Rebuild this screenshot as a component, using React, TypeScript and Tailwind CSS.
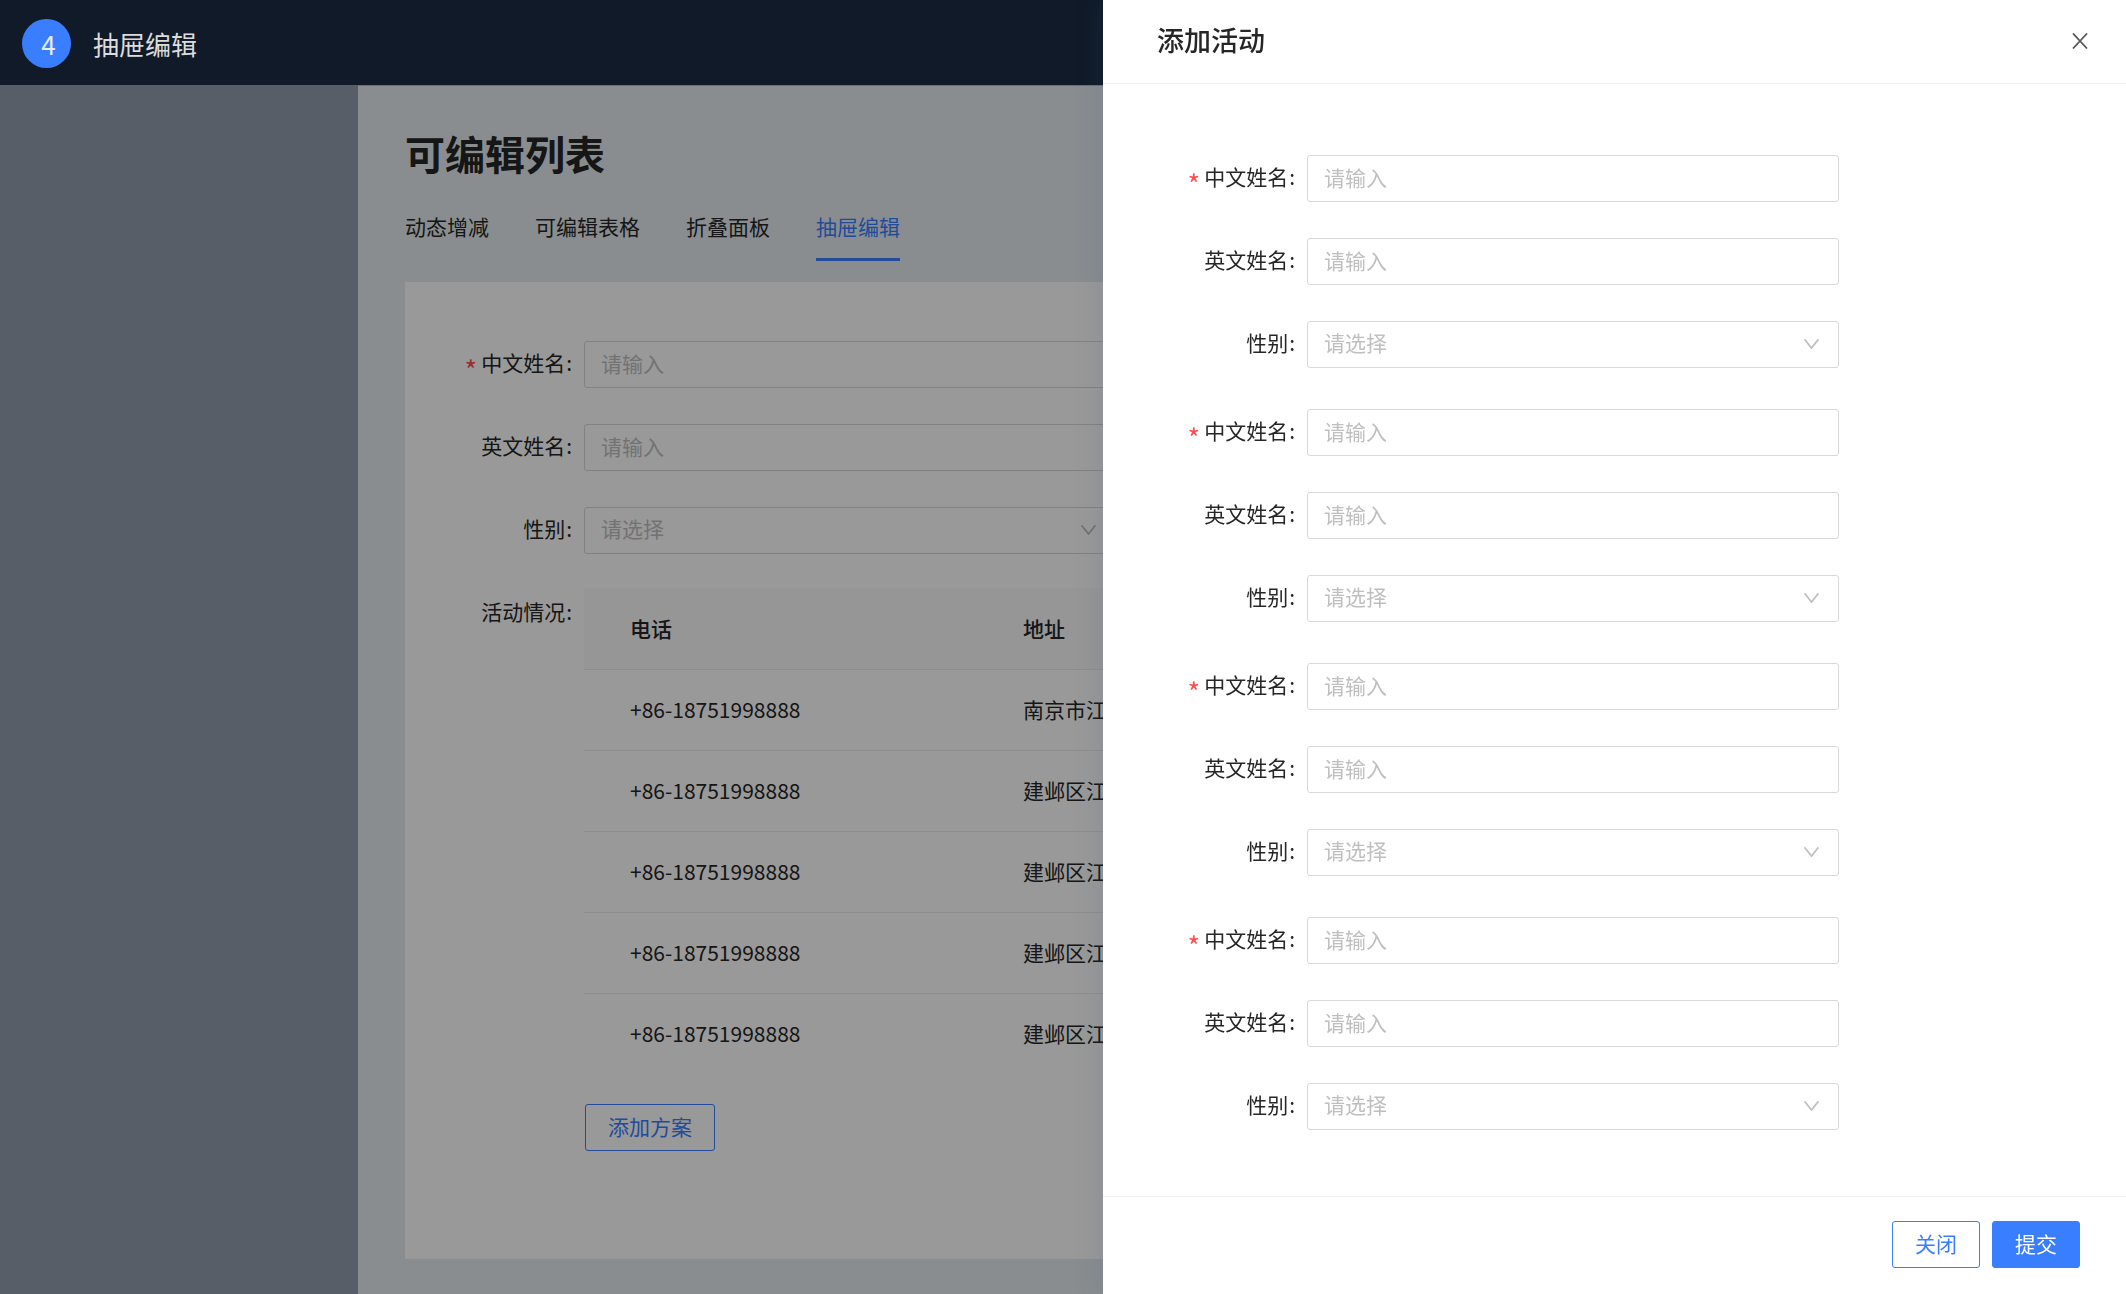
import { useId, useState } from "react";
import type { ReactNode } from "react";

interface Row {
  phone: string;
  address: string;
}

const tabs = ["动态增减", "可编辑表格", "折叠面板", "抽屉编辑"];

const rows: Row[] = [
  { phone: "+86-18751998888", address: "南京市江宁区" },
  { phone: "+86-18751998888", address: "建邺区江东中路" },
  { phone: "+86-18751998888", address: "建邺区江东中路" },
  { phone: "+86-18751998888", address: "建邺区江东中路" },
  { phone: "+86-18751998888", address: "建邺区江东中路" },
];

const controlClass =
  "h-[47px] w-full rounded-[3px] border border-[#d9d9d9] bg-white px-4 pb-[3px] text-[21px] outline-none";

function Label({
  text,
  htmlFor,
  required,
}: {
  text: string;
  htmlFor?: string;
  required?: boolean;
}) {
  const content = (
    <>
      {required && (
        <span className="mr-1 pt-3 text-[27px] leading-none text-[#ff4d4f]">
          *
        </span>
      )}
      {text}
      <span className="ml-px">:</span>
    </>
  );
  if (!htmlFor) {
    return <span className="flex items-center whitespace-nowrap">{content}</span>;
  }
  return (
    <label htmlFor={htmlFor} className="flex items-center whitespace-nowrap">
      {content}
    </label>
  );
}

function Field({
  label,
  required,
  children,
}: {
  label: string;
  required?: boolean;
  children: (id: string) => ReactNode;
}) {
  const id = useId();
  return (
    <>
      <div className="flex items-center justify-end pr-3 pb-[3px]">
        <Label text={label} htmlFor={id} required={required} />
      </div>
      <div className="relative max-w-[532px]">{children(id)}</div>
    </>
  );
}

function PersonFields() {
  return (
    <>
      <Field label="中文姓名" required>
        {(id) => (
          <input
            id={id}
            type="text"
            placeholder="请输入"
            className={`${controlClass} placeholder:text-[#bfbfbf]`}
          />
        )}
      </Field>
      <Field label="英文姓名">
        {(id) => (
          <input
            id={id}
            type="text"
            placeholder="请输入"
            className={`${controlClass} placeholder:text-[#bfbfbf]`}
          />
        )}
      </Field>
      <Field label="性别">
        {(id) => (
          <>
            <select
              id={id}
              defaultValue=""
              className={`${controlClass} appearance-none text-[#bfbfbf]`}
            >
              <option value="">请选择</option>
              <option value="male">男</option>
              <option value="female">女</option>
            </select>
            <svg
              className="pointer-events-none absolute top-[18px] right-5 h-[10px] w-[15px]"
              viewBox="0 0 15 10"
              fill="none"
              stroke="#bfbfbf"
              strokeWidth={1.7}
            >
              <path d="M0.6 0.3L7.5 9.1L14.4 0.3" />
            </svg>
          </>
        )}
      </Field>
    </>
  );
}

function ActivityDrawer({ onClose }: { onClose: () => void }) {
  return (
    <>
      <div className="fixed inset-0 bg-black/40" />
      <aside
        role="dialog"
        aria-label="添加活动"
        className="fixed inset-y-0 right-0 z-20 flex w-[1023px] max-w-full flex-col bg-white shadow-[-6px_0_24px_rgba(60,80,130,0.12)]"
      >
        <header className="flex h-[84px] shrink-0 items-center justify-between border-b border-[#f0f0f0] pr-[38px] pb-[2px] pl-[54px]">
          <h2 className="text-[27px] font-medium">添加活动</h2>
          <button type="button" aria-label="关闭抽屉" onClick={onClose}>
            <svg
              className="h-4 w-4"
              viewBox="0 0 16 16"
              fill="none"
              stroke="#595959"
              strokeWidth={1.8}
            >
              <path d="M1 0.5L15 15.5M15 0.5L1 15.5" />
            </svg>
          </button>
        </header>

        <form className="flex flex-1 flex-col gap-[41px] overflow-auto pt-[71px]">
          {[0, 1, 2, 3].map((i) => (
            <div key={i} className="grid grid-cols-[204px_1fr] gap-y-9">
              <PersonFields />
            </div>
          ))}
        </form>

        <footer className="flex h-[98px] shrink-0 items-center justify-end gap-3 border-t border-[#f0f0f0] pr-[46px] pb-[2px]">
          <button
            type="button"
            onClick={onClose}
            className="h-[47px] rounded-[3px] border border-[#397eff] px-[22px] pb-[2px] text-[#397eff]"
          >
            关闭
          </button>
          <button
            type="submit"
            className="h-[47px] rounded-[3px] border border-[#397eff] bg-[#397eff] px-[22px] pb-[2px] text-white"
          >
            提交
          </button>
        </footer>
      </aside>
    </>
  );
}

export default function App() {
  const [open, setOpen] = useState(true);
  const [active, setActive] = useState("抽屉编辑");

  return (
    <div className="flex min-h-screen flex-col font-['Noto_Sans_CJK_SC',sans-serif] text-[21px] text-[#262626]">
      <header className="relative z-10 flex h-[85px] items-center gap-[22px] bg-[#101a28] px-[22px] pt-[2px] text-[26px] text-[#dcdcdc]">
        <span className="flex h-[49px] w-[49px] items-center justify-center rounded-full bg-[#397eff] pl-1 text-[#e6edfc]">
          4
        </span>
        <span>抽屉编辑</span>
      </header>

      <div className="flex flex-1">
        <nav className="w-[358px] shrink-0 bg-[#919dad]" />

        <main className="flex min-w-0 flex-1 flex-col border-t border-[#b3bbc4] bg-[#e4ecf1] px-[47px] pt-[39px] pb-[35px]">
          <h1 className="text-[40px] leading-[56px] font-bold">可编辑列表</h1>

          <div role="tablist" className="mt-[31px] flex gap-[46px]">
            {tabs.map((tab) => (
              <button
                key={tab}
                type="button"
                role="tab"
                aria-selected={tab === active}
                onClick={() => setActive(tab)}
                className={`border-b-[3px] pb-[18px] leading-7 ${
                  tab === active
                    ? "border-[#397eff] text-[#397eff]"
                    : "border-transparent"
                }`}
              >
                {tab}
              </button>
            ))}
          </div>

          <section className="mt-[21px] flex-1 bg-white pt-[59px] pb-[60px]">
            <div className="grid grid-cols-[179px_1fr] gap-y-9">
              <PersonFields />
            </div>

            <div className="mt-[34px] grid grid-cols-[179px_1fr]">
              <div className="flex items-start justify-end pt-2 pr-3">
                <Label text="活动情况" />
              </div>
              <div>
                <table className="w-full table-fixed text-left">
                  <thead>
                    <tr className="h-[81px] border-b border-[#ececec] bg-[#fafafa]">
                      <th className="w-[393px] pl-[46px] font-medium">电话</th>
                      <th className="pl-[46px] font-medium">地址</th>
                    </tr>
                  </thead>
                  <tbody>
                    {rows.map((row, i) => (
                      <tr
                        key={i}
                        className="h-[81px] border-b border-[#ececec] last:border-b-0"
                      >
                        <td className="pl-[46px]">{row.phone}</td>
                        <td className="pl-[46px]">{row.address}</td>
                      </tr>
                    ))}
                  </tbody>
                </table>
                <button
                  type="button"
                  onClick={() => setOpen(true)}
                  className="mt-[30px] ml-px h-[47px] rounded-[3px] border border-[#397eff] px-[22px] pb-[2px] text-[#397eff]"
                >
                  添加方案
                </button>
              </div>
            </div>
          </section>
        </main>
      </div>

      {open && <ActivityDrawer onClose={() => setOpen(false)} />}
    </div>
  );
}
